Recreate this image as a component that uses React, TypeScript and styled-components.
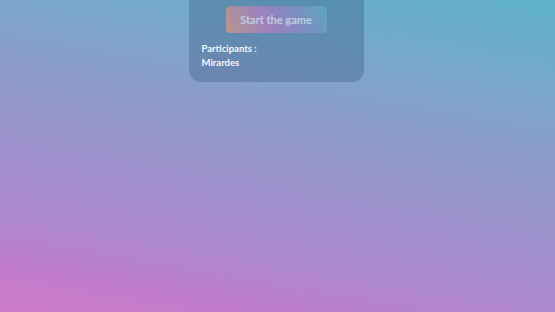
import * as React from "react";
import styled, { createGlobalStyle } from "styled-components";

const GlobalStyle = createGlobalStyle`
  html, body {
    margin: 0;
    padding: 0;
    height: 100%;
    overflow: hidden;
  }
  body {
    font-family: Lato, "Noto Sans", sans-serif;
  }
  #root {
    height: 100%;
  }
`;

const Page = styled.div`
  width: 100%;
  height: 100%;
  display: flex;
  flex-direction: column;
  align-items: center;
  background: linear-gradient(
    190deg,
    #5eb2c8 0%,
    #7ba6cc 24%,
    #8a9ccc 38%,
    #a08fcc 62%,
    #ad88cc 76%,
    #c07ccc 88%,
    #cc7bc9 100%
  );
`;

const Card = styled.div`
  margin-top: -20px;
  margin-left: -3px;
  width: 175px;
  box-sizing: border-box;
  padding: 26px 13px 12px;
  border-radius: 12px;
  background: rgba(50, 80, 120, 0.32);
  display: flex;
  flex-direction: column;
`;

const StartButton = styled.button`
  align-self: center;
  width: 101px;
  height: 27px;
  border: none;
  border-radius: 4px;
  background: linear-gradient(60deg, #eea070 0%, #c47cc8 38%, #9a88d0 65%, #5cb8c8 100%);
  opacity: 0.62;
  color: #f6f6ff;
  font-family: Lato, sans-serif;
  font-weight: 700;
  font-size: 11px;
  cursor: default;
`;

const Participants = styled.div`
  margin-top: 9px;
  display: flex;
  flex-direction: column;
`;

const Line = styled.span`
  color: #f4f6ff;
  font-weight: 700;
  font-size: 9.5px;
  line-height: 14px;
`;

export default function App() {
  const players = ["Mirardes"];
  return (
    <>
      <GlobalStyle />
      <Page>
        <Card>
          <StartButton disabled>Start the game</StartButton>
          <Participants>
            <Line>Participants :</Line>
            {players.map((p) => (
              <Line key={p}>{p}</Line>
            ))}
          </Participants>
        </Card>
      </Page>
    </>
  );
}
